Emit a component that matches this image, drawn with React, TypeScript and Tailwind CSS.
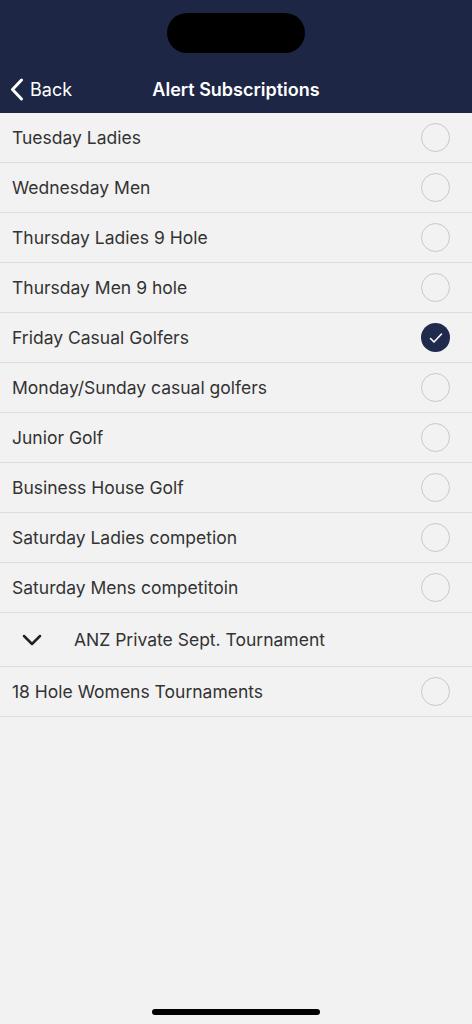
import React from 'react';

type Item = { label: string; checked?: boolean; group?: boolean };

const items: Item[] = [
    { label: 'Tuesday Ladies' },
    { label: 'Wednesday Men' },
    { label: 'Thursday Ladies 9 Hole' },
    { label: 'Thursday Men 9 hole' },
    { label: 'Friday Casual Golfers', checked: true },
    { label: 'Monday/Sunday casual golfers' },
    { label: 'Junior Golf' },
    { label: 'Business House Golf' },
    { label: 'Saturday Ladies competion' },
    { label: 'Saturday Mens competitoin' },
    { label: 'ANZ Private Sept. Tournament', group: true },
    { label: '18 Hole Womens Tournaments' },
];

const Radio: React.FC<{ checked?: boolean }> = ({ checked }) =>
    checked ? (
        <div className="w-[29px] h-[29px] rounded-full bg-[#1f2a4c] flex items-center justify-center">
            <svg width="16" height="16" viewBox="0 0 16 16" fill="none">
                <path d="M2.5 8.5 L6 12 L13.5 4" stroke="white" strokeWidth="1.6" strokeLinecap="round" strokeLinejoin="round" />
            </svg>
        </div>
    ) : (
        <div className="w-[29px] h-[29px] rounded-full border border-[#c9c9c9]" />
    );

const App: React.FC = () => {
    return (
        <div className="w-[472px] h-[1024px] bg-[#f2f2f2] flex flex-col relative" style={{ fontFamily: 'Inter, "Liberation Sans", sans-serif' }}>
            <div className="h-[113px] bg-[#1d2645] flex flex-col">
                <div className="flex justify-center pt-[13px]">
                    <div className="w-[138px] h-[40px] rounded-full bg-black" />
                </div>
                <div className="relative flex items-center justify-center mt-[25px] h-[22px]">
                    <div className="absolute left-[10px] top-[-2px] flex items-center gap-[6px] text-white text-[18px]">
                        <svg width="14" height="23" viewBox="0 0 14 23" fill="none">
                            <path d="M11.5 2 L2.5 11.5 L11.5 21" stroke="white" strokeWidth="3" strokeLinecap="round" strokeLinejoin="round" />
                        </svg>
                        <span>Back</span>
                    </div>
                    <span className="text-white text-[18px] font-semibold">Alert Subscriptions</span>
                </div>
            </div>
            <div className="flex flex-col">
                {items.map((item) =>
                    item.group ? (
                        <div key={item.label} className="h-[54px] flex items-center border-b border-[#dcdcdc] text-[#333333] text-[17.5px]">
                            <div className="w-[74px] pl-[22px]">
                                <svg width="20" height="12" viewBox="0 0 20 12" fill="none">
                                    <path d="M2 2 L10 10 L18 2" stroke="#222" strokeWidth="2.5" strokeLinecap="round" strokeLinejoin="round" />
                                </svg>
                            </div>
                            <span className="pt-[2px]">{item.label}</span>
                        </div>
                    ) : (
                        <div key={item.label} className="h-[50px] flex items-center justify-between pl-[12px] pr-[22px] border-b border-[#dcdcdc] text-[#333333] text-[17.5px]">
                            <span className="pt-[2px]">{item.label}</span>
                            <Radio checked={item.checked} />
                        </div>
                    )
                )}
            </div>
            <div className="absolute bottom-[9px] left-[152px] w-[168px] h-[6px] rounded-full bg-black" />
        </div>
    );
};

export default App;
